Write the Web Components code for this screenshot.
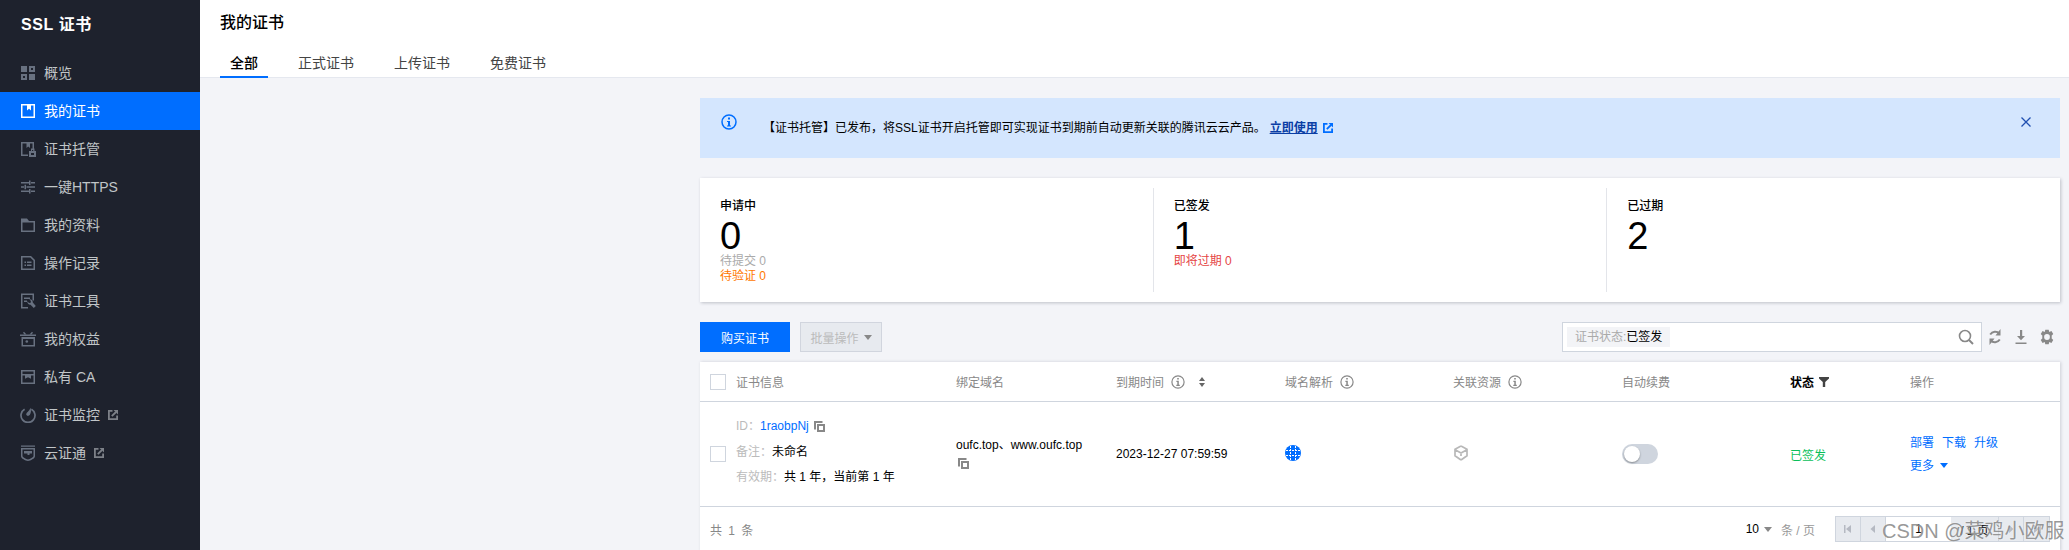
<!DOCTYPE html>
<html lang="zh"><head><meta charset="utf-8"><title>SSL 证书</title>
<style>
html,body{margin:0;height:550px;overflow:hidden;background:#f3f4f8;font-family:"Liberation Sans","Noto Sans CJK SC",sans-serif;font-size:12px}
</style></head><body>
<ssl-app></ssl-app>
<script>
const I={
 grid:'<path fill="currentColor" fill-rule="evenodd" d="M1 1h6v6H1zM9 9h6v6H9zM9 1h6v6H9zM11 3v2h2V3zM1 9h6v6H1zM3 11v2h2v-2z"/>',
 book:'<path fill="currentColor" fill-rule="evenodd" d="M1 1h14v14H1zM2.500 2.500v11h11v-11H11v5L9 5.800 7 7.500v-5z"/>',
 host:'<path fill="currentColor" fill-rule="evenodd" d="M1 1h13v7h-1.500V2.500H10v4.500L8.200 5.500 6.500 7V2.500h-4v11H8V15H1z"/><path fill="currentColor" fill-rule="evenodd" d="M9 10h7v6H9zM11 12v2h3v-2z"/><path fill="currentColor" d="M11 7.500h3.500V10h-1.300V9H12v1h-1z"/>',
 tune:'<path fill="currentColor" d="M1 3h8v1.500H1zM11 3h4v1.500h-4zM9 1.500h1.500v4.500H9zM1 7.300h3v1.500H1zM6.500 7.300H15v1.500H6.500zM4.500 5.800H6v4.500H4.500zM1 11.500h8v1.500H1zM11 11.500h4V13h-4zM9 10h1.500v4.500H9z"/>',
 folder:'<path fill="currentColor" fill-rule="evenodd" d="M1 1.500h6L9 4h6v11H1zM2.500 5.500v8h11v-8z"/>',
 doc:'<path fill="currentColor" fill-rule="evenodd" d="M1 1h10l4 4v10H1zM2.500 2.500v11h11V5.800L10.300 2.500z"/><path fill="currentColor" d="M4.500 6.500h1.500V8H4.500zM7 6.500h4.500V8H7zM4.500 9.500h1.500V11H4.500zM7 9.500h4.500V11H7z"/>',
 tool:'<path fill="currentColor" fill-rule="evenodd" d="M1 .5h13v7h-1.500v-5.500h-10v12H8V15.500H1z"/><path fill="currentColor" d="M4 4.500h6V6H4zM4 7.500h3V9H4zM9.300 6.200a3 3 0 0 1 3.500 3.300L15.800 13l-2 2-3.300-3.300A3 3 0 0 1 7.300 8.300L9 10l1.700-.2.200-1.700z"/>',
 gift:'<path fill="currentColor" fill-rule="evenodd" d="M0 3.500h16V5H0zM1.500 6H15v9.500H1.500zM3 8v6h10.500V8z"/><path fill="currentColor" d="M4 .8 6.500 3.500H4.500L3 1.800zM12 .8 9.500 3.500h2L13 1.800z"/><circle cx="6.800" cy="10.500" r="1.300" fill="currentColor"/>',
 ca:'<path fill="currentColor" fill-rule="evenodd" d="M1 1h14v14H1zM2.500 13.500h11v-7H11v3.200L8 8.300 5 9.700V6.500H2.500zM2.500 2.500V5h11V2.500z"/>',
 mon:'<path fill="none" stroke="currentColor" stroke-width="1.700" d="M4.600 2.300a7 7 0 1 0 6.800 0"/><path fill="currentColor" d="M10.500 .8c.9 2.700.5 5.300-.6 7-.9 1.400-2.900 1.400-3.500.3-.6-1.200.2-2.300 1.500-3.400 1.200-1 2-2.400 2.600-3.900z"/>',
 shield:'<path fill="currentColor" fill-rule="evenodd" d="M1 .5h14v1.300H1zM1 3h14v8.200c0 2.400-4.500 4.300-7 4.800-2.500-.5-7-2.400-7-4.800zM2.500 4.400v6.600c0 1.400 3.500 2.900 5.500 3.500 2-.6 5.500-2.100 5.500-3.500V4.400z"/><path fill="currentColor" d="M4 6h8v2.500H9.500V10h-2V8.500H4z"/>',
 ext:'<path fill="none" stroke="currentColor" stroke-width="1.800" d="M4.500.9H.9v8.200h8.200V5.500"/><path fill="none" stroke="currentColor" stroke-width="1.800" d="M3.800 6.200 8 2"/><path fill="currentColor" d="M5.500 0H10v4.500z"/>',
};
const svg=(k,s=16,vb=16)=>`<svg width="${s}" height="${s}" viewBox="0 0 ${vb} ${vb}">${I[k]}</svg>`;
const info=(c='#888')=>`<svg width="14" height="14" viewBox="0 0 14 14" style="color:${c};display:block"><circle cx="7" cy="7" r="6.100" fill="none" stroke="currentColor" stroke-width="1.200"/><path fill="currentColor" d="M6.200 3h1.600v1.600H6.200zM5.400 5.700h2.400v4h1v1.200H5.300V9.700h1V6.900h-.9z"/></svg>`;
const copy=`<svg width="11" height="11" viewBox="0 0 11 11" style="display:block"><path fill="#888" fill-rule="evenodd" d="M0 0h8.500v2H2v6.500H0zM3 3h8v8H3zM5 5v4h4V5z"/></svg>`;

class Base extends HTMLElement{
  constructor(){super();this.attachShadow({mode:'open'}).innerHTML=`<style>${this.css()}</style>${this.html()}`}
  css(){return''} html(){return'<slot></slot>'}
}
const def=(n,c)=>customElements.define(n,c);

def('side-item',class extends Base{
 css(){return`:host{display:flex;align-items:center;height:38px;padding-left:20px;gap:8px;color:#c1c6c8;font-size:14px}
 :host([active]){background:#006eff;color:#fff}
 svg{display:block}.i{color:#687180;display:flex}:host([active]) .i{color:#fff}
 .l{padding-bottom:2px}
 .e{color:#7d8188;display:flex}`}
 html(){const e=this.hasAttribute('ext');return`<span class="i">${svg(this.getAttribute('icon'))}</span><span class="l"><slot></slot></span>${e?`<span class="e">${svg('ext',10,10)}</span>`:''}`}
});
def('ssl-sidebar',class extends Base{
 css(){return`:host{display:block;width:200px;height:550px;flex:none;background:#1e222d}
 h1{margin:0;height:54px;box-sizing:border-box;padding:15px 0 0 21px;font-size:16px;line-height:20px;color:#fff;font-weight:700;letter-spacing:.6px}`}
 html(){return`<h1>SSL 证书</h1>
 <side-item icon="grid">概览</side-item><side-item icon="book" active>我的证书</side-item><side-item icon="host">证书托管</side-item><side-item icon="tune">一键HTTPS</side-item><side-item icon="folder">我的资料</side-item><side-item icon="doc">操作记录</side-item><side-item icon="tool">证书工具</side-item><side-item icon="gift">我的权益</side-item><side-item icon="ca">私有 CA</side-item><side-item icon="mon" ext>证书监控</side-item><side-item icon="shield" ext>云证通</side-item>`}
});
def('page-head',class extends Base{
 css(){return`:host{display:block;height:78px;box-sizing:border-box;background:#fff;border-bottom:1px solid #e5e8ef;padding-left:20px}
 h2{margin:0;font-size:16px;line-height:24px;padding-top:11px;font-weight:500;color:#000;height:35px;box-sizing:content-box}
 nav{display:flex;gap:20px}
 a{display:block;padding:0 10px;height:32px;line-height:34px;font-size:14px;color:#444;box-sizing:border-box}
 a.on{color:#000;font-weight:500;border-bottom:2px solid #006eff}`}
 html(){return`<h2>我的证书</h2><nav><a class="on">全部</a><a>正式证书</a><a>上传证书</a><a>免费证书</a></nav>`}
});
def('notice-bar',class extends Base{
 css(){return`:host{display:flex;height:60px;background:#d4e6fe;color:#000;box-sizing:border-box;padding:16px 27px 0 21px}
 .i{width:16px;height:16px;flex:none;color:#006eff;margin-right:26px}
 .t{flex:1;font-size:12px;line-height:16px;padding-top:6px;display:flex;white-space:nowrap}
 a{color:#0a3ea5;font-weight:700;text-decoration:underline;margin-left:4px}
 .e{color:#006eff;margin:3px 0 0 5px;display:flex}
 .x{width:14px;height:14px;margin-top:1px}`}
 html(){return`<svg class="i" viewBox="0 0 16 16"><circle cx="8" cy="8" r="7" fill="none" stroke="currentColor" stroke-width="1.500"/><path fill="currentColor" d="M7 3.500h2v2H7zM6 7h3v4.500h1V12.500H6v-1h1V8H6z"/></svg>
 <div class="t"><span><slot></slot></span><a>立即使用</a><span class="e">${svg('ext',10,10)}</span></div>
 <svg class="x" viewBox="0 0 14 14"><path d="M2.500 2.500l9 9M11.500 2.500l-9 9" stroke="#1f4fb0" stroke-width="1.300" fill="none"/></svg>`}
});
def('stat-col',class extends Base{
 css(){return`:host{display:block;box-sizing:border-box;flex:1;padding:10px 0 0 20px;border-left:1px solid #e3e5ea;height:104px;color:#000}
 :host(:first-child){border-left:0}
 .l{font-size:12px;line-height:16px;font-weight:500;height:16px}
 .n{font-size:38px;line-height:36px;margin-top:4px;height:36px}
 ::slotted(div){font-size:12px;line-height:15px}`}
 html(){return`<div class="l">${this.getAttribute('label')}</div><div class="n">${this.getAttribute('num')}</div><slot></slot>`}
});
def('stat-card',class extends Base{
 css(){return`:host{display:flex;margin-top:20px;height:124px;box-sizing:border-box;padding-top:10px;background:#fff;box-shadow:1px 1px 3px rgba(54,58,80,.28)}`}
});
def('tool-bar',class extends Base{
 css(){return`:host{display:flex;align-items:center;height:30px;margin-top:20px;color:#888}
 .b{height:30px;box-sizing:border-box;display:flex;align-items:center;justify-content:center;font-size:12px}
 .p{width:90px;background:#006eff;color:#fff}
 .d{width:82px;margin-left:10px;background:#e7eaef;border:1px solid #d1d5de;color:#bbb;gap:5px}
 .c{width:0;height:0;border:4px solid transparent;border-top:5px solid #888;border-bottom:0}
 .s{margin-left:auto;width:420px;height:30px;box-sizing:border-box;background:#fff;border:1px solid #cfd5de;display:flex;align-items:center;padding:0 7px 0 4px}
 .tag{height:20px;width:103px;box-sizing:border-box;background:#f3f4f7;line-height:20px;padding-left:8px;color:#aaa;white-space:nowrap}
 .tag b{font-weight:400;color:#000}
 .m{margin-left:auto;display:block}
 .r{display:flex;align-items:center;margin-left:5px;width:73px;gap:10px}
 svg{display:block;flex:none}`}
 html(){return`<div class="b p">购买证书</div><div class="b d">批量操作<i class="c"></i></div>
 <div class="s"><span class="tag">证书状态:<b>已签发</b></span>
 <svg class="m" width="16" height="16" viewBox="0 0 16 16"><circle cx="7" cy="7" r="5.500" fill="none" stroke="#888" stroke-width="1.600"/><path d="M11 11l4 4" stroke="#888" stroke-width="2"/></svg></div>
 <div class="r">
 <svg width="16" height="16" viewBox="0 0 16 16"><path fill="none" stroke="#888" stroke-width="1.900" d="M12.500 4.500A6 6 0 0 0 3.200 5.500M3.500 11.500a6 6 0 0 0 9.300-1"/><path fill="#888" d="M13.500 0v6.500h-5zM2.500 16V9.500h5z"/></svg>
 <svg width="16" height="16" viewBox="0 0 16 16"><path fill="#888" d="M7 1h2.200v6H12L8 11.300 4 7h3zM2.500 13.500h11V15h-11z"/></svg>
 <svg width="16" height="16" viewBox="0 0 16 16"><path fill="#888" fill-rule="evenodd" d="M6.600 1h2.800l.5 1.900 1.800-.8 1.500 2.500-1.400 1.300.2 1.100-.2 1.100 1.400 1.300-1.500 2.500-1.800-.8-.5 1.900H6.600l-.5-1.900-1.800.8-1.500-2.500 1.400-1.300L4 7l.2-1.100L2.800 4.600l1.500-2.500 1.800.8zM8 4.600a2.400 2.400 0 1 0 0 4.800 2.400 2.400 0 0 0 0-4.800z" transform="translate(8 8) scale(1.200) translate(-8 -7)"/></svg>
 </div>`}
});
def('check-box',class extends Base{
 css(){return`:host{display:block;width:16px;height:16px;box-sizing:border-box;border:1px solid #cfd5de;background:#fff;flex:none}`}
});
def('cert-table',class extends Base{
 css(){return`:host{display:block;margin-top:10px;background:#fff;box-shadow:1px 0 3px rgba(54,58,80,.2)}
 .g{display:grid;grid-template-columns:256px 160px 169px 168px 169px 168px 120px 1fr;align-items:center}
 .h{height:40px;box-sizing:border-box;border-bottom:1px solid #cfd5de;color:#888}
 .r{height:105px;box-sizing:border-box;border-bottom:1px solid #cfd5de;color:#000}
 .c{display:flex;align-items:center;gap:7px;white-space:nowrap}
 .first{padding-left:10px;gap:10px}
 .k{color:#bbb}.kv{line-height:16px;display:flex;align-items:center}
 .info{display:flex;flex-direction:column;gap:9.500px;margin-top:-5px}
 a{color:#006eff}
 .sw{width:36px;height:20px;border-radius:10px;background:#cfd5de;box-sizing:border-box}
 .sw i{display:block;width:16px;height:16px;margin:2px;border-radius:50%;background:#fff;box-shadow:0 1px 2px rgba(0,0,0,.35)}
 .ops{display:flex;flex-direction:column;gap:7px;line-height:16px}
 .ops div{display:flex;gap:8px;align-items:center}
 .car{width:0;height:0;border:4px solid transparent;border-top:5px solid #006eff;border-bottom:0}`}
 html(){return`<div class="g h">
 <div class="c first"><check-box></check-box>证书信息</div><div class="c">绑定域名</div>
 <div class="c">到期时间 ${info()}<svg width="8" height="10" viewBox="0 0 8 10" style="margin-left:6px"><path fill="#666" d="M4 0l3 4H1zM4 10L1 6h6z"/></svg></div>
 <div class="c">域名解析 ${info()}</div><div class="c">关联资源 ${info()}</div><div class="c">自动续费</div>
 <div class="c" style="color:#000;font-weight:700;gap:5px">状态<svg width="10" height="10" viewBox="0 0 10 10"><path fill="#444" d="M0 0h10v1.500L6.200 5v5H3.800V5L0 1.500z"/></svg></div><div class="c">操作</div></div>
 <div class="g r">
 <div class="c first"><check-box></check-box><div class="info">
  <div class="kv"><span class="k">ID：</span><a style="margin-right:5px">1raobpNj</a>${copy}</div>
  <div class="kv"><span class="k">备注：</span>未命名</div>
  <div class="kv"><span class="k">有效期：</span>共 1 年，当前第 1 年</div></div></div>
 <div style="line-height:16px;margin-top:-2px"><div>oufc.top、www.oufc.top</div><div style="margin:5px 0 0 2px">${copy}</div></div>
 <div>2023-12-27 07:59:59</div>
 <div><svg width="16" height="16" viewBox="0 0 16 16" style="display:block;margin-top:-3px"><circle cx="8" cy="8" r="8" fill="#006eff"/><path fill="none" stroke="#fff" stroke-width="1" stroke-dasharray="2 1" d="M1 5.500h14M1 10.500h14M5.500 1v14M10.500 1v14"/></svg></div>
 <div><svg width="16" height="16" viewBox="0 0 16 16" style="display:block;margin-top:-3px"><path fill="none" stroke="#b8b8b8" stroke-width="1.700" d="M8 1l6 3.300v6.500L8 15M8 15 2 10.800V4.300L8 1M2.500 5 8 8l5.500-3M8 8v3"/></svg></div>
 <div class="sw"><i></i></div>
 <div style="color:#0abf5b">已签发</div>
 <div class="ops"><div><a>部署</a><a>下载</a><a>升级</a></div><div style="gap:6px"><a>更多</a><i class="car"></i></div></div></div>
 <slot></slot>`}
});
def('table-foot',class extends Base{
 css(){return`:host{display:flex;align-items:center;height:44px;padding:0 10px;color:#888;white-space:nowrap}
 .t{letter-spacing:1.500px}.sz{margin-left:auto;color:#000;display:flex;align-items:center;gap:5px}
 .car{width:0;height:0;border:4px solid transparent;border-top:5px solid #888;border-bottom:0}
 .u{color:#999;margin:0 20px 0 9px}
 .p{display:flex;height:26px;box-sizing:border-box;border:1px solid #cfd5de;background:#e7eaef;width:215px}
 .p>*{display:flex;align-items:center;justify-content:center;box-sizing:border-box}
 .nv{width:25px;border-right:1px solid #cfd5de}.nv svg{display:block}
 .in{width:65px;background:#fff;color:#000}.of{flex:1;color:#000;border-right:1px solid #cfd5de}`}
 html(){const a=(d)=>`<svg width="10" height="10" viewBox="0 0 10 10"><path fill="#b5b9c2" d="${d}"/></svg>`;
 return`<span class="t">共 1 条</span><span class="sz">10<i class="car"></i></span><span class="u">条 / 页</span>
 <div class="p"><span class="nv">${a('M1 1h1.500v8H1zM8 1v8L3 5z')}</span><span class="nv">${a('M7 1v8L2.500 5z')}</span><span class="in">1</span><span class="of">/ 1 页</span><span class="nv">${a('M3 1v8l4.500-4z')}</span><span class="nv" style="border:0">${a('M9 1H7.500v8H9zM2 1v8l5-4z')}</span></div>`}
});
def('water-mark',class extends Base{
 css(){return`:host{position:absolute;left:1882px;top:519px;font-size:20px;line-height:24px;color:rgba(125,125,125,.8);text-shadow:0 0 2px rgba(255,255,255,.7);white-space:nowrap;pointer-events:none}`}
});
def('ssl-app',class extends Base{
 css(){return`:host{display:flex;height:550px;width:2069px;overflow:hidden;color:#000;font-size:12px;position:relative}
 .m{flex:1;min-width:0}.c{padding:20px 9px 0 500px}
 .red{color:#e54545}.gr{color:#aaa}.or{color:#ff7800}`}
 html(){return`<ssl-sidebar></ssl-sidebar><div class="m"><page-head></page-head><div class="c">
 <notice-bar>【证书托管】已发布，将SSL证书开启托管即可实现证书到期前自动更新关联的腾讯云云产品。</notice-bar>
 <stat-card>
  <stat-col label="申请中" num="0"><div class="gr">待提交 0</div><div class="or">待验证 0</div></stat-col>
  <stat-col label="已签发" num="1"><div class="red">即将过期 0</div></stat-col>
  <stat-col label="已过期" num="2"></stat-col>
 </stat-card>
 <tool-bar></tool-bar>
 <cert-table><table-foot></table-foot></cert-table>
 </div></div><water-mark>CSDN @菜鸡小欧服</water-mark>`}
});
</script></body></html>
